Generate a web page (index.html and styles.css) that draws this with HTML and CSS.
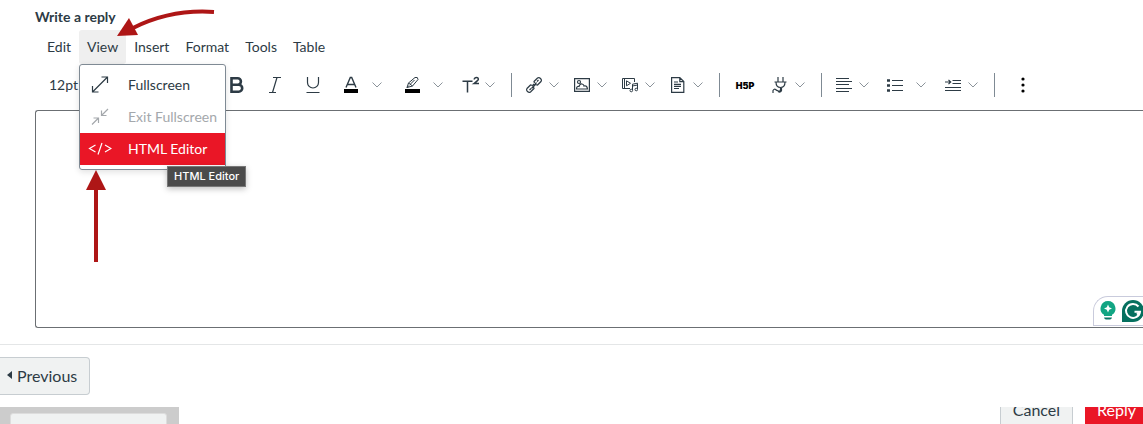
FILE: index.html
```html
<!DOCTYPE html>
<html lang="en">
<head>
    <meta charset="UTF-8">
    <meta name="viewport" content="width=device-width, initial-scale=1.0">
    <title>Write a reply</title>
    <link rel="stylesheet" href="styles.css">
</head>
<body>
    <!-- shared chevron -->
    <svg class="defs" width="0" height="0">
        <symbol id="chevron" viewBox="0 0 10 6"><path d="M.5 .5 5 5 9.5 .5" fill="none" stroke="#8b939a"/></symbol>
    </svg>

    <main class="reply">
        <label class="reply-label" for="message">Write a reply</label>

        <nav class="menubar">
            <button>Edit</button>
            <div class="menu-holder">
                <button class="open">View</button>
                <div class="menu">
                    <button>
                        <svg width="24" height="18" viewBox="0 0 24 18"><path d="M4.5 17 19.500 2M13.5 2h6v6M4.5 11v6h6"/></svg>
                        Fullscreen
                    </button>
                    <button disabled>
                        <svg width="24" height="18" viewBox="0 0 24 18"><path d="M4 17.500 10.500 11M5.500 11h5v5M20 2 13.500 8.500M13.500 3.500v5h5"/></svg>
                        Exit Fullscreen
                    </button>
                    <button class="active">
                        <svg width="24" height="18" viewBox="0 0 24 18"><path d="M7.500 6 1.500 9.500l6 3.500M17 6l6 3.500-6 3.500M14 4 10 15.500"/></svg>
                        HTML Editor
                    </button>
                    <span class="tooltip" role="tooltip">HTML Editor</span>
                </div>
            </div>
            <button>Insert</button>
            <button>Format</button>
            <button>Tools</button>
            <button>Table</button>
        </nav>

        <div class="toolbar">
            <button class="font-size">12pt</button>
            <button class="tool" aria-label="Bold"><svg width="16" height="18" viewBox="0 0 16 18"><path stroke-width="2.6" d="M2.500 2.300h6.200a3.100 3.100 0 0 1 0 6.400H2.500zM2.500 8.700h7.200a3.500 3.500 0 0 1 0 7H2.500z"/></svg></button>
            <button class="tool" aria-label="Italic"><svg width="16" height="18" viewBox="0 0 16 18"><path stroke-width="1.2" d="M6 1.500h8M2 16.500h7M10 1.500l-4.500 15"/></svg></button>
            <button class="tool" aria-label="Underline"><svg width="16" height="18" viewBox="0 0 16 18"><path stroke-width="1.2" d="M2.500 1v5.500a5.500 5.500 0 0 0 11 0V1M1.500 16.500h13"/></svg></button>
            <button class="tool" aria-label="Text color"><svg width="16" height="18" viewBox="0 0 16 18"><path stroke-width="1.4" d="M3 11.500 7.300 1.500h1.400L13 11.500M4.500 8.500h7"/><path class="swatch" d="M1 13h14v4H1z"/></svg></button>
            <button class="arrow" aria-label="Text color menu"><svg width="10" height="6"><use href="#chevron"/></svg></button>
            <button class="tool" aria-label="Highlight"><svg width="16" height="18" viewBox="0 0 16 18"><path d="M3 11.500 4.500 7 11 1.500q3-1 3 2L8.500 10zM4.500 7 8.500 10M6.500 8 10.500 4M3 11.500l2-2"/><path class="swatch" d="M1 13h15v4H1z"/></svg></button>
            <button class="arrow" aria-label="Highlight menu"><svg width="10" height="6"><use href="#chevron"/></svg></button>
            <button class="tool-menu" aria-label="Superscript"><svg width="18" height="18" viewBox="0 0 18 18"><path stroke-width="1.5" d="M.5 5.200h10M5.500 5v11.500M12.200 3.500q.3-2 2.300-2t1.800 2q-.3 1.200-4.300 4h5"/></svg><svg width="10" height="6"><use href="#chevron"/></svg></button>

            <span class="separator"></span>
            <button class="tool-menu" aria-label="Link"><svg width="16" height="18" viewBox="0 0 16 18"><path stroke-width="1.2" d="M8.500 7 8 5.500 11.500 2q1.500-1 3 .5t.5 3L11.500 9 9 8.500M7.500 11l.5 1.500L4.500 16q-1.500 1-3-.5t-.5-3L4.500 9l2.500.5M5.500 12.500l5-6M7 8l2 2M11 5.500l1.500-1.500M3.500 14 5 12.500"/></svg><svg width="10" height="6"><use href="#chevron"/></svg></button>
            <button class="tool-menu" aria-label="Image"><svg width="16" height="18" viewBox="0 0 16 18"><path stroke-width="1.2" d="M.6 2.600h14.800v12.800H.6zM2.500 13q0-3 2.500-2.500 1-3 3-2.500t2 2q3-1 3.500 3zM6.500 6A1.500 1.500 0 1 1 3.500 6a1.500 1.500 0 0 1 3 0z"/></svg><svg width="10" height="6"><use href="#chevron"/></svg></button>
            <button class="tool-menu" aria-label="Media"><svg width="16" height="18" viewBox="0 0 16 18"><path d="M8 12.500H.5v-10h12V6M4.500 4.800v5L8.500 7.300zM2.500 3v9M10.500 14V8.200l5-1V13M10.500 10l5-1"/><circle cx="9.300" cy="14.500" r="1.300"/><circle cx="14.300" cy="13.500" r="1.300"/></svg><svg width="10" height="6"><use href="#chevron"/></svg></button>
            <button class="tool-menu" aria-label="Document"><svg width="16" height="18" viewBox="0 0 16 18"><path stroke-width="1.2" d="M1.600 1.600h8.200l4 4v10.800H1.600zM9.800 1.600v4h4M4 6h4M4 8.300h7M4 10.300h7M4 12.500h5"/></svg><svg width="10" height="6"><use href="#chevron"/></svg></button>

            <span class="separator"></span>
            <button class="tool h5p">H5P</button>
            <button class="tool-menu" aria-label="Apps"><svg width="16" height="18" viewBox="0 0 16 18"><path stroke-width="1.2" d="M6 1v5M11 1v5M2.500 6h12M4 6q0 5.500 4.500 5.500T13 6M8.500 11.500v2q0 2-2 1.500t-3-1.500-2.500 1V17M6 15.500q2.500 1.500 3.500-1v-3"/></svg><svg width="10" height="6"><use href="#chevron"/></svg></button>

            <span class="separator"></span>
            <button class="tool-menu" aria-label="Align"><svg width="16" height="18" viewBox="0 0 16 18"><path stroke-width="1.2" d="M0 2.500h13M0 5.500h16M0 8.500h13M0 12.500h16M0 15.500h13"/></svg><svg width="10" height="6"><use href="#chevron"/></svg></button>
            <button class="tool" aria-label="Bullet list"><svg width="16" height="18" viewBox="0 0 16 18"><path stroke-width="1.2" d="M5 4.500h11M5 9.500h11M5 14.500h11"/><path stroke-width="2.4" d="M0 4.500h3M0 9.500h3M0 14.500h3"/></svg></button>
            <button class="arrow" aria-label="List menu"><svg width="10" height="6"><use href="#chevron"/></svg></button>
            <button class="tool-menu" aria-label="Indent"><svg width="16" height="18" viewBox="0 0 16 18"><path stroke-width="1.2" d="M7.500 4.500H16M7.500 7.500H16M0 11.500h16M0 14.500h16M0 6h5.500M3.500 3.800 5.700 6 3.500 8.200"/></svg><svg width="10" height="6"><use href="#chevron"/></svg></button>

            <span class="separator"></span>
            <button class="tool more" aria-label="More"><svg width="16" height="18" viewBox="0 0 16 18"><circle class="swatch" cx="8" cy="3" r="1.600"/><circle class="swatch" cx="8" cy="9" r="1.600"/><circle class="swatch" cx="8" cy="15" r="1.600"/></svg></button>
        </div>

        <div class="editor">
            <textarea id="message"></textarea>
            <div class="assistant">
                <svg width="16" height="20" viewBox="0 0 16 20"><path fill="#12a583" d="M8 0a7.500 7.500 0 0 1 4 13.800V15H4v-1.200A7.500 7.500 0 0 1 8 0z"/><path fill="#0a7565" d="M4 16.500h8q-.5 2-2 2H6q-1.500 0-2-2z"/><path fill="#fff" d="m8 3.500 1.200 2.800L12 7.500 9.200 8.700 8 11.500 6.800 8.700 4 7.500l2.800-1.200z"/></svg>
                <svg width="22" height="22" viewBox="0 0 22 22"><path fill="#05705f" d="M11 0a11 11 0 0 1 0 22H0V11A11 11 0 0 1 11 0z"/><path fill="none" stroke="#fff" stroke-width="2" d="M16.500 6.500A7 7 0 1 0 18 11.800h-5.500M15 14.500l3-2.700"/></svg>
            </div>
        </div>

        <svg class="mark mark-view" width="98" height="28" viewBox="0 0 98 28"><path fill="none" stroke="#ae1616" stroke-width="4" d="M97 3Q54 0 16 19"/><path fill="#ae1616" d="M0 27 12 9l9 17z"/></svg>
        <svg class="mark mark-html" width="20" height="92" viewBox="0 0 20 92"><path fill="#ae1616" d="M10 0 20 20H12v72H8V20H0z"/></svg>
    </main>

    <div class="pager">
        <button><svg width="5" height="8" viewBox="0 0 5 8"><path d="M5 0v8L0 4z" fill="#2d3b45"/></svg>Previous</button>
    </div>

    <footer class="actions">
        <div class="status"><div class="status-box"></div></div>
        <button class="cancel">Cancel</button>
        <button class="submit">Reply</button>
    </footer>
</body>
</html>
```
FILE: styles.css
```css
* {
    box-sizing: border-box;
}
body {
    margin: 0;
    font-family: Lato, sans-serif;
    font-size: 14px;
    color: #2d3b45;
    background: #fff;
}
button {
    margin: 0;
    padding: 0;
    border: none;
    background: none;
    font: inherit;
    color: inherit;
    cursor: pointer;
}
svg {
    display: block;
    flex: none;
}
.defs {
    position: absolute;
}

.reply {
    position: relative;
    padding: 7px 0 16px 35px;
    border-bottom: 1px solid #e4e6e7;
}
.reply-label {
    display: block;
    height: 23px;
    line-height: 20px;
    font-weight: bold;
}

/* menu bar */
.menubar {
    display: flex;
    height: 34px;
    padding-left: 4px;
}
.menubar button {
    height: 34px;
    padding: 0 8px 2px;
}
.menubar .open {
    background: #efefef;
    border-radius: 3px;
}
.menu-holder {
    position: relative;
}
.menu {
    position: absolute;
    top: 34px;
    left: 0;
    z-index: 2;
    width: 147px;
    padding: 4px 0;
    border: 1px solid #7f8a94;
    border-radius: 3px;
    background: #fff;
    box-shadow: 0 2px 6px rgba(0, 0, 0, 0.12);
}
.menu button {
    display: flex;
    align-items: center;
    gap: 16px;
    width: 100%;
    height: 32px;
    white-space: nowrap;
}
.menu button:disabled {
    color: #a4a8ac;
}
.menu .active {
    background: #ea1626;
    color: #fff;
}
.menu path {
    fill: none;
    stroke: currentColor;
    stroke-width: 1.2;
}
.tooltip {
    position: absolute;
    top: 101px;
    left: 87px;
    padding: 0 6px;
    border: 1px solid #777;
    background: #4b4b4b;
    color: #fff;
    font-family: Inter, sans-serif;
    font-size: 11px;
    font-weight: 500;
    line-height: 19px;
    white-space: nowrap;
    box-shadow: 0 2px 6px rgba(0, 0, 0, 0.25);
}

/* toolbar */
.toolbar {
    display: flex;
    align-items: center;
    height: 46px;
    padding-bottom: 4px;
}
.toolbar button {
    display: flex;
    align-items: center;
    flex: none;
    height: 34px;
}
.toolbar .font-size {
    width: 183px;
    padding: 0 0 2px 14px;
}
.toolbar .tool {
    justify-content: center;
    width: 38px;
}
.toolbar .arrow {
    width: 23px;
    padding-left: 2px;
}
.toolbar .tool-menu {
    justify-content: space-between;
    width: 48px;
    padding: 0 7px 0 8px;
}
.toolbar .more {
    width: 44px;
}
.toolbar .h5p {
    font-family: Inter, sans-serif;
    font-size: 9px;
    font-weight: 900;
    color: #000;
}
.toolbar path,
.toolbar circle {
    fill: none;
    stroke: #2d3b45;
}
.toolbar .swatch {
    fill: #000;
    stroke: none;
}
.separator {
    flex: none;
    width: 1px;
    height: 24px;
    margin: 0 6px 0 9px;
    background: #7f8a94;
}

/* editor */
.editor {
    position: relative;
}
.editor textarea {
    display: block;
    width: 100%;
    height: 218px;
    padding: 12px;
    border: 1px solid #6b6f73;
    border-right: none;
    border-radius: 3px 0 0 3px;
    resize: none;
    outline: none;
    font: inherit;
}
.assistant {
    position: absolute;
    right: 0;
    bottom: 2px;
    display: flex;
    align-items: center;
    gap: 6px;
    width: 50px;
    height: 30px;
    padding-left: 6px;
    overflow: hidden;
    border: 1px solid #c9cbdc;
    border-right: none;
    border-radius: 15px 0 0 0;
    background: #fff;
}

/* red arrows over the editor */
.mark {
    position: absolute;
    z-index: 3;
}
.mark-view {
    top: 9px;
    left: 117px;
}
.mark-html {
    top: 170px;
    left: 86px;
}

.pager {
    padding: 12px 0;
}
.pager button {
    display: flex;
    align-items: center;
    gap: 5px;
    height: 38px;
    padding: 0 12px 2px 7px;
    border: 1px solid #c7cdd1;
    border-left: none;
    border-radius: 0 4px 4px 0;
    background: #f0f2f2;
    font-size: 16px;
}

/* bottom bar */
.actions {
    display: flex;
    gap: 12px;
    height: 17px;
    overflow: hidden;
    font-size: 16px;
}
.actions button {
    height: 38px;
    margin-top: -16px;
    padding: 0 12px 2px;
}
.status {
    width: 179px;
    margin-right: auto;
    padding: 6px 12px 0 10px;
    background: #ccc;
}
.status-box {
    height: 38px;
    border: 1px solid #ddd;
    border-radius: 3px 3px 0 0;
    background: #f0f2f2;
}
.actions .cancel {
    border: 1px solid #c7cdd1;
    background: #f0f2f2;
}
.actions .submit {
    padding-right: 7px;
    background: #ea1626;
    color: #fff;
}
```
